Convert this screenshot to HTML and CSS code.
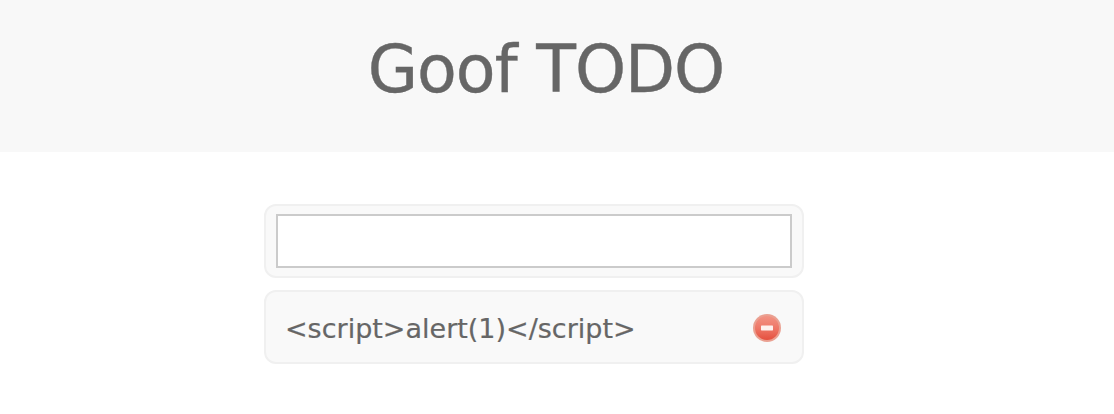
FILE: index.html
```html
<!DOCTYPE html>
<html lang="en">
<head>
<meta charset="utf-8">
<title>Goof TODO</title>
<link rel="stylesheet" href="styles.css">
</head>
<body>
<header class="header"><h1 class="title">Goof TODO</h1></header>
<main class="list">
  <form class="row row-input"><input class="field" type="text" aria-label="New item"></form>
  <div class="row row-item">
    <span class="item-text">&lt;script&gt;alert(1)&lt;/script&gt;</span>
    <svg class="remove" width="30" height="30" viewBox="0 0 30 30" aria-label="Remove">
      <defs>
        <linearGradient id="redfill" x1="0" y1="0" x2="0" y2="1">
          <stop offset="0" stop-color="#f29384"/>
          <stop offset="0.5" stop-color="#ee7868"/>
          <stop offset="1" stop-color="#e5503e"/>
        </linearGradient>
      </defs>
      <circle cx="15" cy="15" r="14" fill="#e7917f" opacity="0.85"/>
      <circle cx="15" cy="15" r="12" fill="url(#redfill)"/>
      <rect x="9" y="12.6" width="12" height="4.8" rx="0.6" fill="#fdf1ee"/>
    </svg>
  </div>
</main>
</body>
</html>
```
FILE: styles.css
```css
* { box-sizing: border-box; }
html, body { margin: 0; padding: 0; }
body {
  background: #fff;
  color: #666;
  font-family: "DejaVu Sans", "Open Sans", sans-serif;
}
.header {
  height: 152px;
  background: #f8f8f8;
  display: flex;
  justify-content: center;
  padding: 25px 22px 0 0;
}
.title {
  margin: 0;
  font-size: 65px;
  line-height: 90px;
  font-weight: 400;
  letter-spacing: -1px;
  color: #666;
  -webkit-text-stroke: 0.4px #666;
}
.list {
  width: 540px;
  margin: 52px 0 0 264px;
  display: flex;
  flex-direction: column;
  gap: 12px;
}
.row {
  background: #f9f9f9;
  border: 2px solid #f0f0f0;
  border-radius: 12px;
}
.row-input {
  height: 74px;
  padding: 8px 10px;
  margin: 0;
}
.field {
  display: block;
  width: 100%;
  height: 54px;
  background: #fff;
  border: 2px solid #cbcbcb;
  outline: none;
  padding: 0;
}
.row-item {
  height: 74px;
  padding: 2px 20px 0 19px;
  display: flex;
  align-items: center;
  justify-content: space-between;
}
.item-text {
  font-size: 27px;
  color: #666;
  -webkit-text-stroke: 0.2px #666;
}
.remove { display: block; }
```
